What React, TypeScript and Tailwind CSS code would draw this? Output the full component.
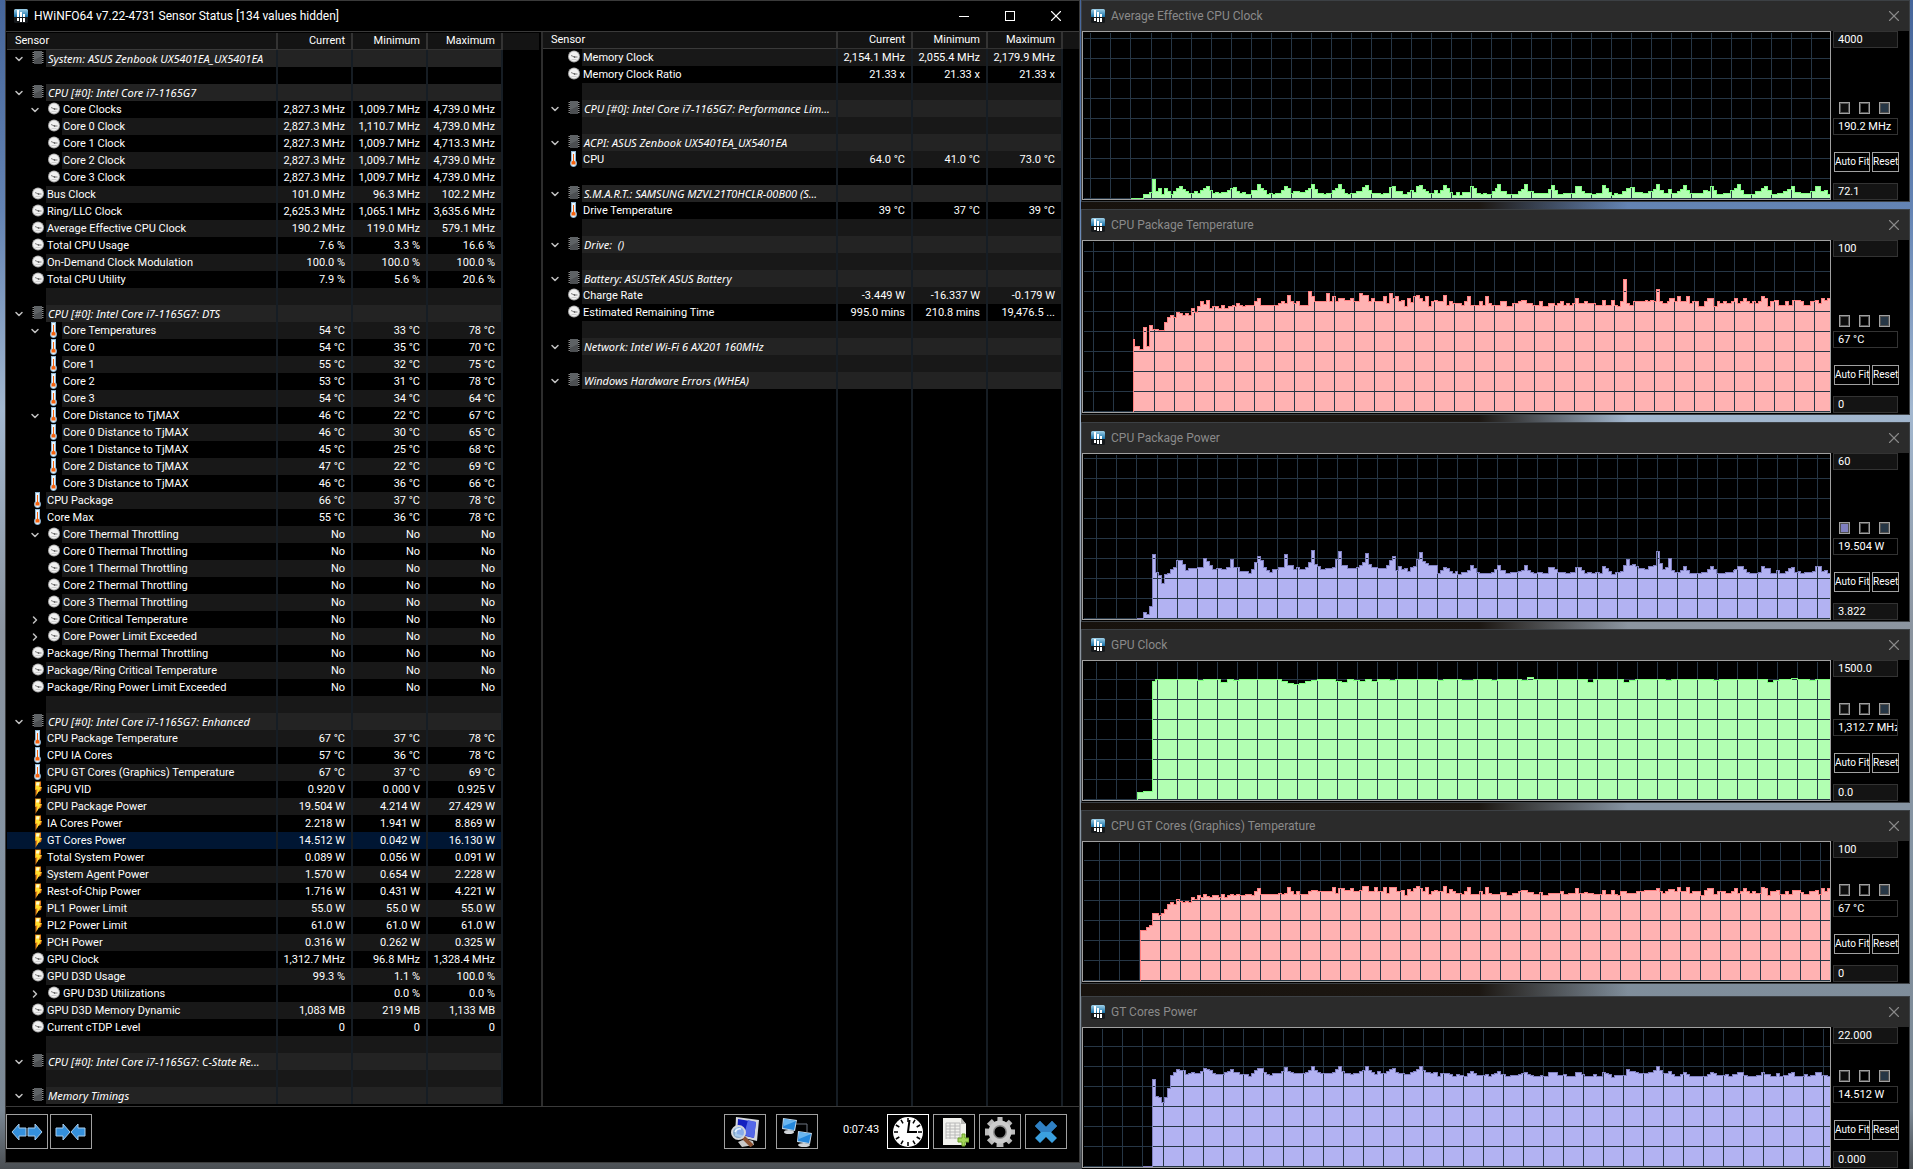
import { useId } from "react"
import { ChevronDown, ChevronRight, X } from "lucide-react"

type Kind = "group" | "blank" | "clock" | "temp" | "power"

type Row = {
  kind: Kind
  label?: string
  values?: string[]
  child?: boolean
  toggle?: "open" | "closed"
  selected?: boolean
}

const group = (label: string): Row => ({ kind: "group", label, toggle: "open" })
const blank: Row = { kind: "blank" }
const item = (kind: Kind, label: string, values: string[], extra: Partial<Row> = {}): Row => ({ kind, label, values, ...extra })
const no = ["No", "No", "No"]

const leftRows: Row[] = [
  group("System: ASUS Zenbook UX5401EA_UX5401EA"),
  blank,
  group("CPU [#0]: Intel Core i7-1165G7"),
  item("clock", "Core Clocks", ["2,827.3 MHz", "1,009.7 MHz", "4,739.0 MHz"], { child: true, toggle: "open" }),
  item("clock", "Core 0 Clock", ["2,827.3 MHz", "1,110.7 MHz", "4,739.0 MHz"], { child: true }),
  item("clock", "Core 1 Clock", ["2,827.3 MHz", "1,009.7 MHz", "4,713.3 MHz"], { child: true }),
  item("clock", "Core 2 Clock", ["2,827.3 MHz", "1,009.7 MHz", "4,739.0 MHz"], { child: true }),
  item("clock", "Core 3 Clock", ["2,827.3 MHz", "1,009.7 MHz", "4,739.0 MHz"], { child: true }),
  item("clock", "Bus Clock", ["101.0 MHz", "96.3 MHz", "102.2 MHz"]),
  item("clock", "Ring/LLC Clock", ["2,625.3 MHz", "1,065.1 MHz", "3,635.6 MHz"]),
  item("clock", "Average Effective CPU Clock", ["190.2 MHz", "119.0 MHz", "579.1 MHz"]),
  item("clock", "Total CPU Usage", ["7.6 %", "3.3 %", "16.6 %"]),
  item("clock", "On-Demand Clock Modulation", ["100.0 %", "100.0 %", "100.0 %"]),
  item("clock", "Total CPU Utility", ["7.9 %", "5.6 %", "20.6 %"]),
  blank,
  group("CPU [#0]: Intel Core i7-1165G7: DTS"),
  item("temp", "Core Temperatures", ["54 °C", "33 °C", "78 °C"], { child: true, toggle: "open" }),
  item("temp", "Core 0", ["54 °C", "35 °C", "70 °C"], { child: true }),
  item("temp", "Core 1", ["55 °C", "32 °C", "75 °C"], { child: true }),
  item("temp", "Core 2", ["53 °C", "31 °C", "78 °C"], { child: true }),
  item("temp", "Core 3", ["54 °C", "34 °C", "64 °C"], { child: true }),
  item("temp", "Core Distance to TjMAX", ["46 °C", "22 °C", "67 °C"], { child: true, toggle: "open" }),
  item("temp", "Core 0 Distance to TjMAX", ["46 °C", "30 °C", "65 °C"], { child: true }),
  item("temp", "Core 1 Distance to TjMAX", ["45 °C", "25 °C", "68 °C"], { child: true }),
  item("temp", "Core 2 Distance to TjMAX", ["47 °C", "22 °C", "69 °C"], { child: true }),
  item("temp", "Core 3 Distance to TjMAX", ["46 °C", "36 °C", "66 °C"], { child: true }),
  item("temp", "CPU Package", ["66 °C", "37 °C", "78 °C"]),
  item("temp", "Core Max", ["55 °C", "36 °C", "78 °C"]),
  item("clock", "Core Thermal Throttling", no, { child: true, toggle: "open" }),
  item("clock", "Core 0 Thermal Throttling", no, { child: true }),
  item("clock", "Core 1 Thermal Throttling", no, { child: true }),
  item("clock", "Core 2 Thermal Throttling", no, { child: true }),
  item("clock", "Core 3 Thermal Throttling", no, { child: true }),
  item("clock", "Core Critical Temperature", no, { child: true, toggle: "closed" }),
  item("clock", "Core Power Limit Exceeded", no, { child: true, toggle: "closed" }),
  item("clock", "Package/Ring Thermal Throttling", no),
  item("clock", "Package/Ring Critical Temperature", no),
  item("clock", "Package/Ring Power Limit Exceeded", no),
  blank,
  group("CPU [#0]: Intel Core i7-1165G7: Enhanced"),
  item("temp", "CPU Package Temperature", ["67 °C", "37 °C", "78 °C"]),
  item("temp", "CPU IA Cores", ["57 °C", "36 °C", "78 °C"]),
  item("temp", "CPU GT Cores (Graphics) Temperature", ["67 °C", "37 °C", "69 °C"]),
  item("power", "iGPU VID", ["0.920 V", "0.000 V", "0.925 V"]),
  item("power", "CPU Package Power", ["19.504 W", "4.214 W", "27.429 W"]),
  item("power", "IA Cores Power", ["2.218 W", "1.941 W", "8.869 W"]),
  item("power", "GT Cores Power", ["14.512 W", "0.042 W", "16.130 W"], { selected: true }),
  item("power", "Total System Power", ["0.089 W", "0.056 W", "0.091 W"]),
  item("power", "System Agent Power", ["1.570 W", "0.654 W", "2.228 W"]),
  item("power", "Rest-of-Chip Power", ["1.716 W", "0.431 W", "4.221 W"]),
  item("power", "PL1 Power Limit", ["55.0 W", "55.0 W", "55.0 W"]),
  item("power", "PL2 Power Limit", ["61.0 W", "61.0 W", "61.0 W"]),
  item("power", "PCH Power", ["0.316 W", "0.262 W", "0.325 W"]),
  item("clock", "GPU Clock", ["1,312.7 MHz", "96.8 MHz", "1,328.4 MHz"]),
  item("clock", "GPU D3D Usage", ["99.3 %", "1.1 %", "100.0 %"]),
  item("clock", "GPU D3D Utilizations", ["", "0.0 %", "0.0 %"], { child: true, toggle: "closed" }),
  item("clock", "GPU D3D Memory Dynamic", ["1,083 MB", "219 MB", "1,133 MB"]),
  item("clock", "Current cTDP Level", ["0", "0", "0"]),
  blank,
  group("CPU [#0]: Intel Core i7-1165G7: C-State Re..."),
  blank,
  group("Memory Timings"),
]

const rightRows: Row[] = [
  item("clock", "Memory Clock", ["2,154.1 MHz", "2,055.4 MHz", "2,179.9 MHz"]),
  item("clock", "Memory Clock Ratio", ["21.33 x", "21.33 x", "21.33 x"]),
  blank,
  group("CPU [#0]: Intel Core i7-1165G7: Performance Lim..."),
  blank,
  group("ACPI: ASUS Zenbook UX5401EA_UX5401EA"),
  item("temp", "CPU", ["64.0 °C", "41.0 °C", "73.0 °C"]),
  blank,
  group("S.M.A.R.T.: SAMSUNG MZVL21T0HCLR-00B00 (S..."),
  item("temp", "Drive Temperature", ["39 °C", "37 °C", "39 °C"]),
  blank,
  group("Drive:  ()"),
  blank,
  group("Battery: ASUSTeK ASUS Battery"),
  item("clock", "Charge Rate", ["-3.449 W", "-16.337 W", "-0.179 W"]),
  item("clock", "Estimated Remaining Time", ["995.0 mins", "210.8 mins", "19,476.5 ..."]),
  blank,
  group("Network: Intel Wi-Fi 6 AX201 160MHz"),
  blank,
  group("Windows Hardware Errors (WHEA)"),
]

type Graph = {
  title: string
  max: string
  value: string
  min: string
  height: number
  grid: number
  line: string
  fill: string
  lineSwatch?: boolean
  // x,height pairs; each height holds until the next x
  steps: number[]
}

const GREEN = { line: "#80ff80", fill: "#b2ffb2" }
const RED = { line: "#ff8080", fill: "#ffb2b2" }
const VIOLET = { line: "#8080c0", fill: "#b2b2f2" }

const graphs: Graph[] = [
  {
    title: "Average Effective CPU Clock", max: "4000", value: "190.2 MHz", min: "72.1", height: 167, grid: 7, ...GREEN,
    steps: [
      48,1, 60,5, 66,7, 69,20, 72,8, 75,11, 78,5, 81,11, 84,8, 87,5, 90,8, 93,11, 96,13, 99,10, 102,8, 105,6, 111,8, 114,6, 117,9, 120,11,
      123,13, 126,9, 129,6, 132,7, 135,6, 138,7, 144,9, 147,11, 150,12, 153,8, 156,6, 159,7, 162,5, 168,9, 174,15, 177,11, 180,9, 183,5,
      186,6, 189,5, 192,6, 198,9, 201,13, 204,11, 207,6, 210,8, 216,7, 222,9, 225,11, 228,15, 231,10, 234,6, 240,5, 243,6, 249,9, 252,11,
      255,15, 258,10, 261,6, 264,5, 267,6, 273,8, 279,12, 282,14, 285,9, 288,6, 297,5, 300,6, 306,12, 309,13, 312,8, 319,5, 324,7, 327,9,
      330,7, 333,13, 336,14, 339,10, 342,8, 345,6, 351,9, 354,6, 357,9, 360,14, 363,11, 366,7, 369,4, 373,7, 376,4, 379,7, 387,13, 390,11,
      393,6, 397,5, 400,6, 403,5, 409,8, 412,11, 414,15, 417,8, 423,5, 435,8, 438,10, 441,15, 444,8, 450,6, 465,10, 468,14, 471,9, 474,5,
      480,6, 492,13, 498,8, 501,6, 508,5, 513,6, 519,14, 522,11, 525,7, 528,4, 531,6, 534,5, 539,8, 543,11, 547,12, 551,7, 559,6, 565,8,
      570,10, 573,15, 576,9, 580,6, 585,10, 588,6, 594,8, 597,10, 600,14, 603,9, 606,6, 620,9, 624,8, 627,13, 630,9, 633,5, 640,6, 647,9,
      651,11, 654,15, 657,9, 660,5, 672,8, 678,11, 681,13, 684,9, 688,5, 694,6, 700,8, 704,10, 708,13, 711,7, 717,6, 727,8, 732,13, 737,8,
      741,9, 744,5,
    ],
  },
  {
    title: "CPU Package Temperature", max: "100", value: "67 °C", min: "0", height: 171, grid: 10, ...RED,
    steps: [
      50,73, 51,66, 56,63, 60,85, 63,66, 66,87, 69,83, 75,82, 81,90, 84,95, 87,97, 90,95, 93,100, 96,99, 99,97, 102,99, 105,97, 108,104,
      111,100, 114,106, 117,111, 120,108, 123,112, 126,104, 129,106, 135,104, 138,107, 141,104, 145,106, 149,107, 151,106, 153,109, 156,107,
      159,106, 162,107, 171,111, 174,114, 177,107, 195,109, 198,111, 201,109, 204,117, 207,111, 210,109, 213,111, 216,107, 225,121, 228,116,
      231,111, 243,119, 246,111, 249,116, 252,111, 255,114, 261,112, 267,114, 270,111, 276,119, 279,117, 285,111, 288,114, 291,111, 300,116,
      303,109, 306,119, 309,114, 312,116, 315,111, 318,112, 321,106, 324,114, 327,110, 330,116, 333,117, 336,114, 339,111, 342,116, 345,106,
      348,111, 351,112, 354,111, 360,117, 363,107, 366,111, 369,109, 378,107, 381,111, 384,116, 387,107, 396,111, 399,107, 402,116, 405,109,
      408,107, 417,111, 423,106, 429,109, 435,111, 438,112, 443,109, 449,107, 456,111, 459,106, 465,109, 471,107, 474,109, 477,111, 480,107,
      483,109, 486,107, 489,109, 492,114, 495,109, 501,111, 504,109, 512,107, 519,112, 522,107, 528,112, 531,107, 534,106, 537,111, 540,133,
      543,109, 546,107, 550,111, 562,112, 564,111, 567,112, 570,111, 573,123, 576,111, 579,109, 584,111, 586,114, 591,111, 594,116, 597,111,
      603,116, 606,109, 609,111, 615,106, 621,111, 624,114, 630,106, 634,111, 636,109, 640,111, 643,109, 648,111, 651,114, 654,109, 657,111,
      660,114, 663,111, 666,109, 669,111, 672,109, 675,111, 678,116, 681,114, 684,106, 687,111, 691,112, 695,107, 702,111, 705,107, 709,112,
      717,111, 720,107, 727,111, 732,112, 735,109, 738,114, 741,112, 744,114,
    ],
  },
  {
    title: "CPU Package Power", max: "60", value: "19.504 W", min: "3.822", height: 165, grid: 13, ...VIOLET, lineSwatch: true,
    steps: [
      54,1, 60,7, 63,5, 66,13, 69,65, 72,47, 75,44, 78,36, 81,45, 84,46, 87,50, 90,52, 93,59, 99,55, 102,49, 105,51, 114,52, 120,61, 123,58,
      126,54, 129,50, 133,51, 138,50, 143,52, 147,60, 150,52, 156,48, 165,46, 168,50, 171,57, 174,63, 177,59, 180,52, 183,49, 186,47, 189,50,
      195,52, 201,65, 204,54, 210,50, 213,52, 216,50, 222,52, 225,57, 228,69, 231,55, 234,53, 237,50, 242,51, 249,52, 252,60, 255,68, 258,54,
      264,51, 273,52, 276,54, 279,57, 282,66, 285,55, 288,52, 294,51, 303,54, 306,59, 309,63, 312,49, 315,53, 318,50, 321,51, 324,48, 327,52,
      330,53, 333,60, 336,67, 339,58, 342,56, 345,54, 354,46, 357,49, 360,52, 363,51, 366,48, 369,46, 372,48, 374,45, 378,47, 384,49, 387,54,
      390,51, 393,47, 396,46, 408,47, 411,50, 414,54, 417,49, 422,46, 427,47, 435,48, 438,49, 441,54, 444,49, 447,47, 450,46, 454,47, 459,46,
      465,52, 471,50, 474,47, 482,46, 487,47, 492,52, 498,49, 501,46, 504,47, 508,46, 512,47, 516,46, 519,53, 522,51, 525,48, 528,45, 532,47,
      537,48, 540,54, 543,60, 546,54, 549,55, 552,53, 555,51, 561,50, 565,53, 570,54, 573,68, 576,56, 579,50, 582,52, 585,61, 588,49, 591,47,
      597,49, 600,53, 603,49, 606,46, 618,47, 624,50, 627,53, 630,50, 633,46, 642,47, 650,49, 651,50, 654,53, 660,50, 663,47, 666,46, 675,47,
      678,53, 681,51, 687,46, 693,49, 696,46, 702,48, 705,51, 708,52, 711,47, 715,48, 717,46, 721,47, 729,48, 732,53, 738,48, 741,49, 744,46,
    ],
  },
  {
    title: "GPU Clock", max: "1500.0", value: "1,312.7 MHz", min: "0.0", height: 139, grid: 13, ...GREEN,
    steps: [
      54,8, 60,9, 69,119, 72,121, 114,120, 120,121, 137,118, 144,121, 150,120, 156,121, 198,119, 204,117, 210,116, 216,117, 222,119, 228,120,
      234,121, 252,119, 258,118, 264,121, 270,120, 276,119, 282,121, 288,119, 294,121, 306,120, 312,121, 354,120, 360,121, 378,120, 390,121,
      408,120, 414,121, 438,120, 444,123, 450,121, 504,118, 510,121, 540,118, 546,120, 552,121, 582,120, 588,121, 630,120, 636,121, 684,118,
      690,120, 696,121, 708,122, 714,121, 726,120, 732,121,
    ],
  },
  {
    title: "CPU GT Cores (Graphics) Temperature", max: "100", value: "67 °C", min: "0", height: 139, grid: 16, ...RED,
    steps: [
      57,51, 63,54, 66,56, 69,68, 75,66, 78,68, 81,72, 84,77, 87,79, 90,77, 93,82, 96,80, 99,79, 102,80, 105,79, 108,84, 111,82, 114,86,
      117,84, 120,87, 123,85, 126,84, 129,86, 135,84, 138,87, 141,84, 144,86, 147,87, 150,86, 153,87, 156,86, 162,87, 168,86, 171,90, 174,93,
      177,87, 195,88, 198,87, 201,88, 204,94, 207,90, 210,87, 213,90, 216,87, 225,90, 228,91, 234,90, 249,94, 252,88, 255,93, 261,91, 267,93,
      270,90, 276,91, 279,95, 285,90, 291,94, 294,90, 300,94, 303,88, 306,94, 313,90, 318,91, 321,86, 324,92, 327,90, 330,93, 333,95, 336,93,
      339,90, 342,94, 345,87, 348,90, 351,91, 354,90, 360,95, 363,88, 366,92, 369,90, 372,88, 378,87, 381,90, 384,94, 387,87, 396,90, 399,87,
      402,94, 405,88, 408,87, 417,89, 423,86, 429,88, 435,90, 438,91, 444,89, 450,87, 456,89, 459,86, 465,88, 477,90, 480,87, 485,88, 492,93,
      495,88, 501,89, 504,88, 510,87, 519,91, 522,87, 528,91, 531,87, 534,86, 537,90, 543,88, 553,90, 561,91, 573,93, 576,90, 579,88, 582,90,
      585,92, 591,90, 594,94, 597,90, 603,94, 606,88, 609,90, 617,86, 621,91, 624,93, 630,87, 634,90, 642,88, 648,90, 651,93, 654,88, 657,90,
      660,93, 663,90, 666,88, 669,90, 672,88, 678,94, 681,93, 684,86, 687,90, 693,91, 696,87, 702,90, 705,87, 709,91, 717,89, 720,87, 726,90,
      732,91, 735,87, 738,93, 741,90, 744,93,
    ],
  },
  {
    title: "GT Cores Power", max: "22.000", value: "14.512 W", min: "0.000", height: 139, grid: 19, ...VIOLET,
    steps: [
      60,1, 69,88, 72,71, 75,70, 78,65, 81,70, 84,79, 87,92, 90,95, 93,98, 96,97, 102,93, 105,94, 108,95, 111,94, 117,96, 120,99, 123,98,
      126,97, 129,94, 132,93, 141,95, 144,96, 147,98, 150,95, 156,93, 165,91, 168,94, 171,97, 174,99, 180,95, 183,93, 186,92, 189,94, 198,96,
      201,100, 204,96, 207,95, 210,94, 222,95, 225,97, 228,101, 231,97, 234,95, 237,94, 249,95, 252,98, 255,101, 258,96, 261,94, 267,93,
      270,94, 276,96, 279,97, 282,101, 285,97, 288,95, 291,93, 294,96, 297,94, 303,96, 306,98, 309,99, 312,95, 315,94, 321,93, 327,95,
      330,96, 333,98, 336,101, 339,97, 342,95, 347,94, 350,95, 354,91, 357,94, 366,93, 369,91, 373,93, 376,92, 380,91, 384,94, 387,96, 390,94,
      393,92, 402,93, 405,91, 408,93, 411,94, 414,96, 417,93, 422,91, 427,92, 435,93, 438,94, 441,95, 444,93, 447,92, 450,91, 457,92, 459,91,
      465,95, 474,92, 480,93, 483,91, 492,95, 498,93, 501,91, 510,93, 513,91, 519,95, 522,94, 525,93, 528,90, 531,92, 543,98, 546,96, 552,95,
      555,94, 565,95, 570,97, 573,101, 576,97, 579,94, 585,96, 588,93, 591,91, 597,93, 600,95, 603,93, 606,91, 624,93, 627,95, 630,94,
      633,92, 642,93, 645,91, 649,93, 654,95, 660,92, 664,91, 673,92, 678,95, 681,93, 687,91, 693,94, 696,91, 700,92, 705,94, 708,95, 711,91,
      721,93, 724,91, 727,92, 732,95, 738,92, 744,91,
    ],
  },
]

function AppLogo() {
  const id = useId()
  return (
    <svg viewBox="0 0 14 14" className="h-3.5 w-3.5 shrink-0" aria-hidden="true">
      <defs>
        <linearGradient id={id} x1="0" y1="0" x2="0" y2="1">
          <stop offset="0" stopColor="#9fd0e8" />
          <stop offset="1" stopColor="#1470a8" />
        </linearGradient>
      </defs>
      <rect width="14" height="14" rx="1.5" fill="#15181b" />
      <path d="M1.5 0h11A1.5 1.5 0 0 1 14 1.5V8H0V1.5A1.5 1.5 0 0 1 1.5 0z" fill={`url(#${id})`} />
      <path d="M3 1h2v7H3zM6 3h2v5H6zM9 5h2v3H9zM3 9h2v3H3zM6 9h2v4H6zM9 9h2v4H9z" fill="#fff" />
    </svg>
  )
}

function RowIcon({ kind }: { kind: Kind }) {
  if (kind === "blank") return null
  return (
    <svg viewBox="0 0 16 16" className="h-4 w-4 shrink-0" aria-hidden="true">
      {kind === "group" && (
        <>
          <path d="M2.500 2.500h11M2.500 4.500h11M2.500 6.500h11M2.500 8.500h11M2.500 10.500h11M2.500 12.500h11" stroke="#8a8a8a" strokeWidth="1" />
          <rect x="4" y="1" width="8" height="13" fill="#4c4f52" />
          <path d="M4 1h8v5l-8 4z" fill="#5e6265" />
        </>
      )}
      {kind === "clock" && (
        <>
          <circle cx="8" cy="7.500" r="6" fill="#a8a8a8" />
          <circle cx="8" cy="7.500" r="5" fill="#f1f1f1" />
          <path d="M5 6.500L8.500 8h3" stroke="#666" strokeWidth="0.800" fill="none" />
          <circle cx="8.500" cy="8" r="0.800" fill="#444" />
          <path d="M5.500 10.500h5" stroke="#d0d0d0" />
        </>
      )}
      {kind === "temp" && (
        <>
          <path d="M5 0h5v9.500a4 4 0 0 1 1 2.500c0 2.400-1.500 4-3.500 4S4 14.400 4 12a4 4 0 0 1 1-2.500z" fill="#8fb6d3" />
          <path d="M6 1h3v9l1 2c0 1.800-1 3-2.500 3S5 13.800 5 12l1-2z" fill="#e9f6ff" />
          <path d="M7 3h1v6.500l1.500 1.500v2.500h-4V11L7 9.500z" fill="#f4610c" />
        </>
      )}
      {kind === "power" && (
        <>
          <path d="M5 .5h6v4L10.500 6H12L11 10l-3 1-2.500 5V9H5z" fill="#e07818" />
          <path d="M6 1h4L9 6h2.500L6.500 14 7.500 8.500H5.500z" fill="#ffe02e" />
          <path d="M6.500 1.500h3L9 4.500H6z" fill="#fffbd0" />
        </>
      )}
    </svg>
  )
}

function SensorRow({ row, shaded }: { row: Row; shaded: boolean }) {
  const bg = row.selected ? "" : row.kind === "group" ? "bg-[#232323]" : shaded ? "bg-[#181818]" : ""
  const Chevron = row.toggle === "closed" ? ChevronRight : ChevronDown
  return (
    <tr className={row.selected ? "bg-[#001633]" : ""}>
      <td className="p-0">
        <div className="flex h-[17px]">
          <span className={`flex shrink-0 ${row.child ? "w-[55px] pl-4" : "w-[39px]"}`}>
            <span className="flex w-[23px] shrink-0 items-center justify-center">
              {row.toggle && (
                <button aria-label={`Toggle ${row.label}`} className="text-[#c0c0c0]">
                  <Chevron className="block h-3 w-3" strokeWidth={3} />
                </button>
              )}
            </span>
            <RowIcon kind={row.kind} />
          </span>
          <span
            className={`min-w-0 flex-1 overflow-hidden whitespace-pre text-left ${bg} ${row.kind === "group" ? "pl-0.5 font-['Noto_Sans',sans-serif] italic" : "pl-px"}`}
          >
            {row.label}
          </span>
        </div>
      </td>
      {[0, 1, 2].map((i) => (
        <td key={i} className={`border-l-2 border-[#161d24] p-0 pr-1.5 text-right whitespace-nowrap ${bg}`}>
          {row.values?.[i]}
        </td>
      ))}
      <td className="border-l-2 border-[#161d24] bg-black p-0" />
    </tr>
  )
}

function SensorTable({ rows, nameCol, caption }: { rows: Row[]; nameCol: string; caption: string }) {
  return (
    <>
      <table aria-label={caption} className="w-full table-fixed border-separate border-spacing-0 text-[11px] leading-[17px] text-white">
        <colgroup>
          <col className={nameCol} />
          <col className="w-[75px]" />
          <col className="w-[75px]" />
          <col className="w-[75px]" />
          <col />
        </colgroup>
        <thead>
          <tr className="bg-[#141414] align-top">
            <th className="h-[17px] border-b border-[#3a3a3a] p-0 pl-2 text-left font-normal leading-[15px]">Sensor</th>
            {["Current", "Minimum", "Maximum"].map((h) => (
              <th key={h} className="h-[17px] border-b border-l-2 border-[#333333] p-0 pr-1.5 text-right font-normal leading-[15px]">
                {h}
              </th>
            ))}
            <th aria-label="Filler" className="h-[17px] border-l-2 border-[#333333] p-0" />
          </tr>
        </thead>
        <tbody>
          {rows.map((row, i) => (
            <SensorRow key={i} row={row} shaded={i % 2 === 0} />
          ))}
        </tbody>
      </table>
      {/* column rules run on below the last row */}
      <div className="flex flex-1">
        <div className={nameCol} />
        <div className="w-[75px] border-l-2 border-[#161d24]" />
        <div className="w-[75px] border-l-2 border-[#161d24]" />
        <div className="w-[75px] border-l-2 border-[#161d24]" />
        <div className="flex-1 border-l-2 border-[#161d24]" />
      </div>
    </>
  )
}

function ToolButton({ label, active, children }: { label: string; active?: boolean; children: React.ReactNode }) {
  return (
    <button
      aria-label={label}
      className={`flex h-[35px] w-[42px] items-center justify-center border bg-black ${active ? "border-white" : "border-[#a0a0a0]"}`}
    >
      {children}
    </button>
  )
}

function ArrowPair({ inward }: { inward?: boolean }) {
  const left = "M1 10L8 2v4h7v8H8v4z"
  const right = "M15 10L8 2v4H1v8h7v4z"
  return (
    <svg viewBox="0 0 34 20" className="h-5 w-[34px]" fill="#3490dc" stroke="#a9cdec" strokeWidth="1" aria-hidden="true">
      <path d={inward ? right : left} transform="translate(1 0)" />
      <path d={inward ? left : right} transform={inward ? "translate(16 0)" : "translate(17 0)"} />
    </svg>
  )
}

function Toolbar() {
  return (
    <div className="flex h-14 items-start border-t border-[#3a3a3a] pt-[7px] pr-3">
      <div className="flex gap-0.5">
        <ToolButton label="Expand columns"><ArrowPair /></ToolButton>
        <ToolButton label="Shrink columns"><ArrowPair inward /></ToolButton>
      </div>
      <div className="ml-auto flex gap-2.5">
        <ToolButton label="System summary">
          <svg viewBox="0 0 30 30" className="h-[30px] w-[30px]" aria-hidden="true">
            <path d="M8 25q7-4 15-1l1 4-12 2z" fill="#c9c9c9" />
            <path d="M6 0l23 3-2 21L5 19z" fill="#d5d9de" />
            <path d="M8 2l18 3-2 16-17-4z" fill="#1420c0" />
            <path d="M18 3l8 2-2 16-10-3z" fill="#5468e8" />
            <path d="M13 20l9 9" stroke="#8a5030" strokeWidth="4" />
            <circle cx="8.500" cy="15.500" r="6.500" fill="#9cc6ee" fillOpacity="0.850" stroke="#d4d8dc" strokeWidth="2" />
            <path d="M5 15q2-4 6-3" stroke="#e8f4ff" strokeWidth="1.500" fill="none" />
          </svg>
        </ToolButton>
        <ToolButton label="Network monitoring">
          <svg viewBox="0 0 32 32" className="h-8 w-8" aria-hidden="true">
            <path d="M15 8h11v8" stroke="#6c7480" strokeWidth="1" fill="none" />
            <ellipse cx="8" cy="16" rx="5" ry="2" fill="#d0d4d8" />
            <path d="M2 2l14 2-2 11-13-2z" fill="#c3d8ea" />
            <path d="M3 3l12 2-2 9-11-2z" fill="#2487dc" />
            <path d="M3 3l12 2-12 5z" fill="#6ab6f0" />
            <ellipse cx="23" cy="29" rx="6" ry="2" fill="#d0d4d8" />
            <path d="M17 15l14 2-2 11-13-2z" fill="#c3d8ea" />
            <path d="M18 16l12 2-2 9-11-2z" fill="#2487dc" />
            <path d="M18 16l12 2-12 5z" fill="#6ab6f0" />
          </svg>
        </ToolButton>
      </div>
      <span className="mr-[5px] ml-[25px] w-[39px] text-[11px] leading-8 whitespace-nowrap text-white">0:07:43</span>
      <div className="flex gap-1">
        <ToolButton label="Reset clock" active>
          <svg viewBox="0 0 32 32" className="h-8 w-8" aria-hidden="true">
            <circle cx="16" cy="16" r="15" fill="#fff" />
            <g stroke="#000" strokeWidth="1.500">
              <path d="M16 2v4M16 26v4M2 16h4M26 16h4" />
              <path d="M16 2v4M16 26v4M2 16h4M26 16h4" transform="rotate(30 16 16)" />
              <path d="M16 2v4M16 26v4M2 16h4M26 16h4" transform="rotate(60 16 16)" />
            </g>
            <path d="M17.500 4L16 16h9" stroke="#000" strokeWidth="2" fill="none" />
          </svg>
        </ToolButton>
        <ToolButton label="Start logging">
          <svg viewBox="0 0 30 30" className="h-[30px] w-[30px]" aria-hidden="true">
            <path d="M4 1h18l5 6v21H4z" fill="#f2f2ee" />
            <path d="M22 1l5 6h-5z" fill="#b8b8b4" />
            <path d="M7 6h14M7 9h14M7 12h14M7 15h14M7 18h14M7 21h14M7 6v16M11 6v16M16 6v16M21 6v16" stroke="#b8b8b8" strokeWidth="1" fill="none" />
            <path d="M23 17h3v4h4v4h-4v4h-3v-4h-4v-4h4z" fill="#a4d65a" stroke="#6aa028" strokeWidth="1" />
          </svg>
        </ToolButton>
        <ToolButton label="Settings">
          <svg viewBox="0 0 32 32" className="h-8 w-8" aria-hidden="true">
            <g fill="#bdbdbd">
              <path d="M13.500 1h5l1 30h-7z" />
              <path d="M13.500 1h5l1 30h-7z" transform="rotate(45 16 16)" />
              <path d="M13.500 1h5l1 30h-7z" transform="rotate(90 16 16)" />
              <path d="M13.500 1h5l1 30h-7z" transform="rotate(135 16 16)" />
            </g>
            <circle cx="16" cy="16" r="11.500" fill="#cccccc" />
            <circle cx="16" cy="16" r="7" fill="#8c8c8c" />
            <circle cx="16" cy="16" r="5.500" fill="#000" />
          </svg>
        </ToolButton>
        <ToolButton label="Close sensors">
          <svg viewBox="0 0 24 24" className="h-6 w-6" aria-hidden="true">
            <path d="M6 1l6 6 6-6 5 5-6 6 6 6-5 5-6-6-6 6-5-5 6-6-6-6z" fill="#3ba0e0" />
            <path d="M6 1l6 6 6-6 5 5-6 6H7L1 6z" fill="#2f80c4" />
          </svg>
        </ToolButton>
      </div>
    </div>
  )
}

function SensorWindow() {
  return (
    <main className="flex shrink grow basis-[1075px] flex-col self-start border border-[#3a3a3a] bg-black">
      <header className="flex h-[30px] items-center pl-2">
        <AppLogo />
        <h1 className="ml-1.5 text-xs text-white">HWiNFO64 v7.22-4731 Sensor Status [134 values hidden]</h1>
        <div className="ml-auto flex text-white">
          <button aria-label="Minimize" className="flex h-7 w-[46px] items-center justify-center">
            <span className="h-px w-2.5 bg-white" />
          </button>
          <button aria-label="Maximize" className="flex h-7 w-[46px] items-center justify-center">
            <span className="h-2.5 w-2.5 border border-white" />
          </button>
          <button aria-label="Close" className="flex h-7 w-[46px] items-center justify-center">
            <X className="h-[18px] w-[18px]" strokeWidth={1.5} />
          </button>
        </div>
      </header>
      <div className="flex border-t border-[#3a3a3a]">
        <section className="flex grow basis-[537px] flex-col border-r-2 border-[#2d2d2d] pt-px pr-0.5 pb-0.5 pl-px">
          <SensorTable rows={leftRows} nameCol="w-[269px]" caption="Sensors" />
        </section>
        <section className="flex grow basis-[536px] flex-col">
          <SensorTable rows={rightRows} nameCol="w-[293px]" caption="More sensors" />
        </section>
      </div>
      <Toolbar />
    </main>
  )
}

const CHART_WIDTH = 747

function Chart({ graph }: { graph: Graph }) {
  const { height: h, grid, steps, line, fill } = graph
  let outline = `M${steps[0]} ${h}`
  for (let i = 0; i < steps.length; i += 2) outline += `V${h - steps[i + 1]}H${steps[i + 2] ?? CHART_WIDTH}`
  let rules = ""
  for (let k = 0; grid + k * 20 < CHART_WIDTH; k++) rules += `M${grid + k * 20 + (k > 2 ? 1 : 0)} 0v${h}`
  for (let y = h - 1; y > 0; y -= 20) rules += `M0 ${y}h${CHART_WIDTH}`
  return (
    <div className="min-w-0 flex-1 border border-[#a0a0a0]">
      <svg
        viewBox={`0 0 ${CHART_WIDTH} ${h}`}
        preserveAspectRatio="none"
        shapeRendering="crispEdges"
        className="block w-full"
        style={{ height: h }}
        role="img"
        aria-label={graph.title}
      >
        <path d={`${outline}V${h}z`} fill={fill} />
        <path d={rules} stroke="#263645" fill="none" transform="translate(0.5 0.5)" />
        <path d={outline} stroke={line} fill="none" transform="translate(0.5 0.5)" />
      </svg>
    </div>
  )
}

function GraphWindow({ graph }: { graph: Graph }) {
  const field = "h-[17px] w-[65px] border border-[#333333] pl-1 text-[11px] leading-[15px] text-white outline-none"
  const swatch = "h-3 w-[11px] border border-[#a0a0a0] outline outline-1 -outline-offset-2 outline-[#505050]"
  const push = "h-5 border border-[#a0a0a0] bg-black text-[10px] leading-4 whitespace-nowrap text-white"
  return (
    <section className="border border-[#3c4044] bg-black pb-px">
      <header className="flex h-[30px] items-center bg-[#2b2b2b] pr-1.5 pl-[9px]">
        <AppLogo />
        <h2 className="ml-1.5 text-xs text-[#8a8a8a]">{graph.title}</h2>
        <button aria-label="Close" className="ml-auto text-[#8a8a8a]">
          <X className="block h-[18px] w-[18px]" strokeWidth={1.5} />
        </button>
      </header>
      <div className="flex">
        <Chart graph={graph} />
        <div className="flex w-[78px] flex-col pl-0.5">
          <input aria-label="Maximum" defaultValue={graph.max} className={`${field} bg-[#141414]`} />
          <div className="mt-auto mb-1 flex gap-[9px] pl-1.5">
            <button aria-label="Line colour" className={`${swatch} ${graph.lineSwatch ? "bg-[#8080c0]" : "bg-[#0c0c0c]"}`} />
            <button aria-label="Background colour" className={`${swatch} bg-black`} />
            <button aria-label="Grid colour" className={`${swatch} bg-[#263645]`} />
          </div>
          <input aria-label="Current value" readOnly value={graph.value} className={`${field} mb-[17px] bg-black`} />
          <div className="mb-[11px] flex gap-0.5 pl-px">
            <button className={`${push} w-9`}>Auto Fit</button>
            <button className={`${push} w-[27px]`}>Reset</button>
          </div>
          <input aria-label="Minimum" defaultValue={graph.min} className={`${field} bg-[#141414]`} />
        </div>
      </div>
    </section>
  )
}

export default function App() {
  return (
    <div className="flex h-screen gap-px overflow-hidden bg-[linear-gradient(180deg,#45659a_0%,#6484b4_18%,#a3b8d0_35%,#8b949f_54%,#8594a3_72%,#7b8894_95%,#4a4e52_100%)] pr-[3px] pl-[5px] font-[Roboto,sans-serif]">
      <SensorWindow />
      <aside className="flex shrink grow basis-[829px] flex-col gap-[7px] bg-[linear-gradient(90deg,#17120d_0%,#1c1712_48%,transparent_66%)]">
        {graphs.map((graph, i) => (
          <div key={graph.title} className={i === 5 ? "pt-[5px]" : ""}>
            <GraphWindow graph={graph} />
          </div>
        ))}
      </aside>
    </div>
  )
}
